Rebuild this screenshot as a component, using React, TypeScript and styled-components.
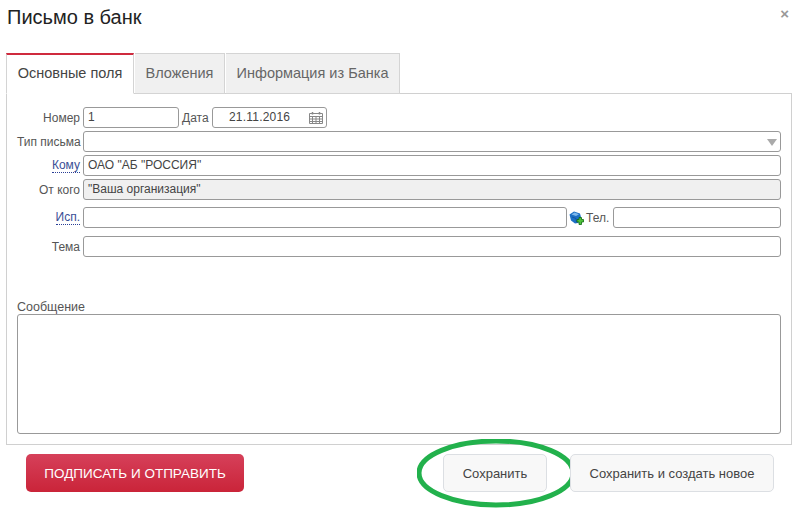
import React from 'react';
import styled, { createGlobalStyle } from 'styled-components';

const GlobalStyle = createGlobalStyle`
	html, body {
		margin: 0;
		padding: 0;
		background: #fff;
		overflow: hidden;
	}
	body {
		font-family: 'Liberation Sans', Arial, sans-serif;
		color: #444;
	}
`;

const Dialog = styled.div`
	width: 800px;
	height: 511px;
	padding: 0 8px 0 6px;
	box-sizing: border-box;
	display: flex;
	flex-direction: column;
	background: #fff;
`;

const Header = styled.div`
	height: 53px;
	flex: none;
	display: flex;
	justify-content: space-between;
	box-sizing: border-box;
	padding: 4px 3px 0 1px;
`;

const Title = styled.h1`
	margin: 0;
	font-size: 20px;
	line-height: 26px;
	font-weight: 400;
	color: #222;
`;

const Close = styled.span`
	font-size: 15px;
	line-height: 20px;
	font-weight: 700;
	color: #999;
`;

const TabBar = styled.div`
	display: flex;
	height: 41px;
	flex: none;
	gap: 1px;
	margin-bottom: -1px;
	position: relative;
`;

const Tab = styled.div<{ $active?: boolean; $width: number }>`
	box-sizing: border-box;
	width: ${(p) => p.$width}px;
	display: flex;
	align-items: center;
	justify-content: center;
	font-size: 14.5px;
	padding-bottom: 2px;
	color: ${(p) => (p.$active ? '#444' : '#666')};
	background: ${(p) => (p.$active ? '#fff' : '#f0f0f0')};
	border: 1px solid #d4d4d4;
	border-top: ${(p) => (p.$active ? '2px solid #cf2a3e' : '1px solid #d4d4d4')};
	border-bottom: ${(p) => (p.$active ? '1px solid #fff' : '1px solid #d4d4d4')};
	border-left: ${(p) => (p.$active ? '1px solid #d4d4d4' : 'none')};
`;

const Panel = styled.div`
	box-sizing: border-box;
	height: 352px;
	flex: none;
	border: 1px solid #d0d0d0;
	padding: 13px 10px 10px 10px;
	display: flex;
	flex-direction: column;
`;

const Row = styled.div<{ $mt?: number }>`
	display: flex;
	align-items: center;
	height: 21px;
	margin-top: ${(p) => p.$mt ?? 3}px;
`;

const Label = styled.span<{ $link?: boolean }>`
	width: 66px;
	flex: none;
	padding-right: 3px;
	box-sizing: border-box;
	text-align: right;
	font-size: 12px;
	white-space: nowrap;
	color: ${(p) => (p.$link ? '#3a4f96' : '#555')};
`;

const LinkText = styled.span`
	border-bottom: 1px dotted #2a3f96;
	line-height: 13px;
	display: inline-block;
`;

const InlineLabel = styled.span<{ $ml: number; $w: number }>`
	margin-left: ${(p) => p.$ml}px;
	width: ${(p) => p.$w}px;
	flex: none;
	font-size: 12px;
	color: #555;
`;

const Field = styled.div<{ $width?: number; $disabled?: boolean; $center?: boolean }>`
	box-sizing: border-box;
	height: 21px;
	flex: ${(p) => (p.$width ? 'none' : 1)};
	width: ${(p) => (p.$width ? `${p.$width}px` : 'auto')};
	border: 1px solid #999;
	border-radius: 3px;
	background: ${(p) => (p.$disabled ? '#f0f0f0' : '#fff')};
	padding: 0 4px;
	font-size: 12px;
	line-height: 19px;
	color: #444;
	position: relative;
	padding-left: ${(p) => (p.$center ? 16 : 4)}px;
	letter-spacing: ${(p) => (p.$center ? '0.2px' : '0')};
`;

const CalendarIcon = styled.svg`
	position: absolute;
	right: 2px;
	top: 2px;
`;

const Caret = styled.span`
	position: absolute;
	right: 3px;
	top: 7px;
	width: 0;
	height: 0;
	border-left: 5px solid transparent;
	border-right: 5px solid transparent;
	border-top: 7px solid #aaa;
`;

const BookIcon = styled.svg`
	margin-left: 2px;
	flex: none;
`;

const MessageLabel = styled.div`
	margin-top: 44px;
	font-size: 12.5px;
	line-height: 13px;
	color: #555;
`;

const MessageBox = styled.div`
	box-sizing: border-box;
	height: 120px;
	border: 1px solid #999;
	border-radius: 3px;
	background: #fff;
`;

const Footer = styled.div`
	display: flex;
	align-items: flex-start;
	padding: 9px 0 0 20px;
`;

const PrimaryButton = styled.div`
	box-sizing: border-box;
	width: 218px;
	height: 38px;
	border-radius: 5px;
	background: linear-gradient(#d6405a, #ca2439);
	color: #fff;
	font-size: 13.5px;
	display: flex;
	align-items: center;
	justify-content: center;
`;

const SecondaryButton = styled.div<{ $width: number; $ml: number }>`
	box-sizing: border-box;
	width: ${(p) => p.$width}px;
	margin-left: ${(p) => p.$ml}px;
	height: 38px;
	border: 1px solid #dcdfe3;
	border-radius: 5px;
	background: #f8f8f8;
	color: #444;
	font-size: 13px;
	display: flex;
	align-items: center;
	justify-content: center;
	position: relative;
`;

const Highlight = styled.svg`
	position: absolute;
	left: -27px;
	top: -16px;
	pointer-events: none;
`;

const App = () => (
	<Dialog>
		<GlobalStyle />
		<Header>
			<Title>Письмо в банк</Title>
			<Close>×</Close>
		</Header>
		<TabBar>
			<Tab $active $width={128}>Основные поля</Tab>
			<Tab $width={90}>Вложения</Tab>
			<Tab $width={174}>Информация из Банка</Tab>
		</TabBar>
		<Panel>
			<Row $mt={0}>
				<Label>Номер</Label>
				<Field $width={96}>1</Field>
				<InlineLabel $ml={3} $w={30}>Дата</InlineLabel>
				<Field $width={115} $center>
					21.11.2016
					<CalendarIcon width="16" height="16" viewBox="0 0 16 16" fill="none" stroke="#888" strokeWidth="1">
						<path d="M1.5 3.5h13v10h-13zM1.5 6.5h13M1.5 9h13M1.5 11.5h13M4.5 6.5v7M8 6.5v7M11.5 6.5v7" />
						<path d="M4.5 2v2.5M11.5 2v2.5" strokeWidth="1.5" />
					</CalendarIcon>
				</Field>
			</Row>
			<Row>
				<Label>Тип письма</Label>
				<Field><Caret /></Field>
			</Row>
			<Row>
				<Label $link><LinkText>Кому</LinkText></Label>
				<Field>ОАО "АБ "РОССИЯ"</Field>
			</Row>
			<Row>
				<Label>От кого</Label>
				<Field $disabled>"Ваша организация"</Field>
			</Row>
			<Row $mt={7}>
				<Label $link><LinkText>Исп.</LinkText></Label>
				<Field $width={484} />
				<BookIcon width="15" height="15" viewBox="0 0 15 15">
					<path d="M0.5 4.5L5 1.5L11 3.5L12.5 9L9 13L6 13.5L2 10.5Z" fill="#1d6fc4" />
					<path d="M2.5 4.5L5.5 2.5L10 4.2L7 6Z" fill="#7db8ec" />
					<path d="M3 7L7 8.5L7.5 12.5" fill="none" stroke="#0c4f9a" strokeWidth="0.8" />
					<path d="M8 9.5h2v-2h2.5v2h2v2.5h-2v2.5H10v-2.5H8z" fill="#4fc23a" stroke="#0f6b12" strokeWidth="0.8" />
				</BookIcon>
				<InlineLabel $ml={2} $w={27}>Тел.</InlineLabel>
				<Field />
			</Row>
			<Row $mt={8}>
				<Label>Тема</Label>
				<Field />
			</Row>
			<MessageLabel>Сообщение</MessageLabel>
			<MessageBox />
		</Panel>
		<Footer>
			<PrimaryButton>ПОДПИСАТЬ И ОТПРАВИТЬ</PrimaryButton>
			<SecondaryButton $width={104} $ml={199}>
				Сохранить
				<Highlight width="160" height="72" viewBox="0 0 160 72" fill="none">
					<ellipse cx="79" cy="34" rx="77" ry="32" stroke="#22b14c" strokeWidth="5" />
				</Highlight>
			</SecondaryButton>
			<SecondaryButton $width={204} $ml={23}>Сохранить и создать новое</SecondaryButton>
		</Footer>
	</Dialog>
);

export default App;
